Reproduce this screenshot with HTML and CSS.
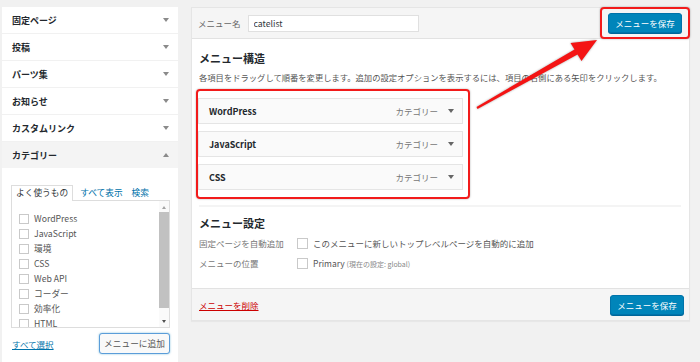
FILE: index.html
```html
<!DOCTYPE html>
<html lang="ja">
<head>
  <meta charset="UTF-8">
  <title>メニュー</title>
  <link rel="stylesheet" href="styles.css">
</head>
<body>

  <div class="page">
    <!-- Left column: add menu items -->
    <aside class="sidebar">
      <div class="acc">固定ページ<span class="caret"></span></div>
      <div class="acc">投稿<span class="caret"></span></div>
      <div class="acc">パーツ集<span class="caret"></span></div>
      <div class="acc">お知らせ<span class="caret"></span></div>
      <div class="acc">カスタムリンク<span class="caret"></span></div>
      <div class="acc acc-open">カテゴリー<span class="caret caret-up"></span></div>
      <div class="acc-body">
        <div class="tabs">
          <span class="tab tab-active">よく使うもの</span>
          <a class="tab">すべて表示</a>
          <a class="tab">検索</a>
        </div>
        <div class="tab-panel">
          <ul class="checklist">
            <li><span class="check"></span>WordPress</li>
            <li><span class="check"></span>JavaScript</li>
            <li><span class="check"></span>環境</li>
            <li><span class="check"></span>CSS</li>
            <li><span class="check"></span>Web API</li>
            <li><span class="check"></span>コーダー</li>
            <li><span class="check"></span>効率化</li>
            <li><span class="check"></span>HTML</li>
          </ul>
          <div class="scrollbar">
            <span class="sb-up"></span>
            <span class="sb-thumb"></span>
            <span class="sb-down"></span>
          </div>
        </div>
        <div class="acc-actions">
          <a class="select-all">すべて選択</a>
          <button class="btn-secondary">メニューに追加</button>
        </div>
      </div>
    </aside>

    <!-- Menu editor -->
    <main class="menu-panel">
      <div class="panel-header">
        <span class="field-label">メニュー名</span>
        <input class="menu-name" type="text" value="catelist">
        <div class="highlight highlight-btn">
          <button class="btn-primary">メニューを保存</button>
        </div>
      </div>

      <div class="panel-body">
        <h3 class="section-title">メニュー構造</h3>
        <p class="description">各項目をドラッグして順番を変更します。追加の設定オプションを表示するには、項目の右側にある矢印をクリックします。</p>

        <div class="highlight highlight-items">
          <div class="menu-item"><span class="item-title">WordPress</span><span class="item-type">カテゴリー</span><span class="caret caret-dark"></span></div>
          <div class="menu-item"><span class="item-title">JavaScript</span><span class="item-type">カテゴリー</span><span class="caret caret-dark"></span></div>
          <div class="menu-item"><span class="item-title">CSS</span><span class="item-type">カテゴリー</span><span class="caret caret-dark"></span></div>
        </div>

        <div class="separator"></div>

        <h3 class="section-title settings-title">メニュー設定</h3>
        <div class="setting-row">
          <span class="setting-label">固定ページを自動追加</span>
          <span class="check"></span>
          <span class="setting-text">このメニューに新しいトップレベルページを自動的に追加</span>
        </div>
        <div class="setting-row">
          <span class="setting-label">メニューの位置</span>
          <span class="check"></span>
          <span class="setting-text">Primary <small>(現在の設定: global)</small></span>
        </div>
      </div>

      <div class="panel-footer">
        <a class="delete-link">メニューを削除</a>
        <button class="btn-primary">メニューを保存</button>
      </div>
    </main>
  </div>

  <!-- Annotation arrow over the screenshot -->
  <svg class="annotation" width="700" height="362" viewBox="0 0 700 362">
    <polygon points="476.5,107 574.5,49.5 570.5,43 597,40 581.5,61 577.5,54.5 477.5,109" />
  </svg>

</body>
</html>
```

FILE: styles.css
```css
body {
  margin: 0;
  background: #f1f1f1;
  font-family: "Noto Sans CJK JP", "Noto Sans", sans-serif;
  font-size: 8.5px;
  color: #444;
  overflow: hidden;
}

.page {
  display: flex;
  align-items: flex-start;
  gap: 13px;
  padding: 7px 0 0 2px;
  height: 355px;
}

/* Sidebar */
.sidebar {
  width: 176px;
  height: 100%;
  display: flex;
  flex-direction: column;
}

.acc {
  height: 26px;
  margin-bottom: 1px;
  background: #fff;
  display: flex;
  align-items: center;
  justify-content: space-between;
  padding: 0 9px 0 10px;
  font-size: 9px;
  font-weight: bold;
  color: #23282d;
}

.acc-open {
  background: #f4f4f4;
  margin-bottom: 0;
}

.caret {
  width: 0;
  height: 0;
  border-left: 3px solid transparent;
  border-right: 3px solid transparent;
  border-top: 4px solid #8a8a8a;
}

.caret-up {
  border-top: 0;
  border-bottom: 4px solid #8a8a8a;
}

.caret-dark {
  border-top-color: #666;
  margin-left: 10px;
}

.acc-body {
  flex: 1;
  background: #fff;
  padding: 17px 8px 0 9px;
}

.tabs {
  display: flex;
  align-items: flex-end;
  height: 15px;
}

.tab {
  font-size: 8.7px;
  line-height: 14px;
  color: #0073aa;
  margin-right: 9px;
}

.tab-active {
  color: #32373c;
  background: #fff;
  border: 1px solid #ddd;
  border-bottom: 0;
  padding: 0 4px;
  margin-right: 7px;
  height: 15px;
  position: relative;
  top: 1px;
}

.tab-panel {
  border: 1px solid #ddd;
  height: 126px;
  display: flex;
  overflow: hidden;
}

.checklist {
  flex: 1;
  list-style: none;
  margin: 0;
  padding: 10px 0 0 7px;
}

.checklist li {
  display: flex;
  align-items: center;
  height: 15px;
  font-size: 8.7px;
  color: #555;
}

.check {
  width: 10px;
  height: 10px;
  border: 1px solid #c9c9c9;
  background: #fff;
  box-sizing: border-box;
  margin-right: 5px;
  flex: none;
}

.scrollbar {
  width: 10px;
  display: flex;
  flex-direction: column;
  align-items: center;
  padding: 3px 0 3px;
  background: #fafafa;
}

.sb-up, .sb-down {
  width: 0;
  height: 0;
  border-left: 2.5px solid transparent;
  border-right: 2.5px solid transparent;
}

.sb-up {
  border-bottom: 3px solid #a3a3a3;
  margin-top: 2px;
}

.sb-down {
  border-top: 3px solid #505050;
  margin-top: auto;
  margin-bottom: 1px;
}

.sb-thumb {
  width: 10px;
  height: 96px;
  background: #c1c1c1;
  margin-top: 3px;
}

.acc-actions {
  display: flex;
  justify-content: space-between;
  align-items: center;
  margin-top: 5px;
  padding-left: 1px;
}

.select-all {
  color: #0073aa;
  text-decoration: underline;
  font-size: 8.5px;
}

.btn-secondary {
  width: 71px;
  height: 21px;
  padding: 0;
  font-family: inherit;
  font-size: 8.7px;
  color: #555;
  background: #f9f9f9;
  border: 1px solid #5b9dd9;
  border-radius: 3px;
  box-shadow: 0 0 2px rgba(30, 140, 190, 0.6);
}

/* Menu editor panel */
.menu-panel {
  width: 497px;
  background: #fff;
  border: 1px solid #e5e5e5;
  box-shadow: 0 1px 1px rgba(0, 0, 0, 0.04);
}

.panel-header {
  height: 30px;
  display: flex;
  align-items: center;
  background: #f5f5f5;
  border-bottom: 1px solid #e2e2e2;
  padding-left: 6px;
}

.field-label {
  color: #666;
  margin-right: 7px;
}

.menu-name {
  width: 171px;
  height: 17px;
  box-sizing: border-box;
  border: 1px solid #e0e0e0;
  padding: 0 5px;
  font-family: inherit;
  font-size: 8.7px;
  color: #32373c;
  outline: none;
}

.highlight {
  border: 2px solid #f21b1b;
  border-radius: 4px;
  box-shadow: 0 0 2px rgba(0, 0, 0, 0.35);
}

.highlight-btn {
  margin-left: auto;
  margin-right: -1px;
  padding: 4px 6px;
}

.btn-primary {
  width: 74px;
  height: 20px;
  padding: 0;
  font-family: inherit;
  font-size: 8.5px;
  color: #fff;
  background: #0085ba;
  border: 1px solid #0073aa;
  border-radius: 3px;
  box-shadow: 0 1px 0 #006799;
}

.panel-body {
  padding: 0 8px 15px 7px;
}

.section-title {
  margin: 11px 0 0;
  font-size: 11px;
  line-height: 16px;
  font-weight: bold;
  color: #23282d;
}

.description {
  margin: 5px 0 0;
  font-size: 8.3px;
  line-height: 12px;
  color: #555;
  white-space: nowrap;
}

.highlight-items {
  width: 274px;
  box-sizing: border-box;
  margin: 6px 0 0 -3px;
  padding: 7px 5px 7px 0;
  display: flex;
  flex-direction: column;
  gap: 7px;
}

.menu-item {
  height: 26px;
  box-sizing: border-box;
  display: flex;
  align-items: center;
  background: #fafafa;
  border: 1px solid #e5e5e5;
  padding: 0 8px 0 10px;
}

.item-title {
  flex: 1;
  font-size: 9px;
  font-weight: bold;
  color: #23282d;
}

.item-type {
  color: #777;
}

.separator {
  margin-top: 6px;
  border-top: 2px solid #f4f4f4;
}

.settings-title {
  margin-top: 8px;
}

.setting-row {
  display: flex;
  align-items: center;
  height: 20px;
  color: #555;
}

.settings-title + .setting-row {
  margin-top: 2px;
}

.setting-label {
  width: 98px;
  color: #777;
}

.setting-row .check {
  width: 11px;
  height: 11px;
  margin-right: 5px;
}

.setting-text small {
  font-size: 7px;
  color: #888;
}

.panel-footer {
  height: 31px;
  display: flex;
  align-items: center;
  justify-content: space-between;
  background: #f5f5f5;
  border-top: 1px solid #e2e2e2;
  padding: 0 5px 0 7px;
}

.delete-link {
  color: #c00;
  text-decoration: underline;
}

/* Annotation */
.annotation {
  position: absolute;
  top: 0;
  left: 0;
  pointer-events: none;
}

.annotation polygon {
  fill: #f41414;
  filter: drop-shadow(0 0 1px rgba(0, 0, 0, 0.35));
}
```
